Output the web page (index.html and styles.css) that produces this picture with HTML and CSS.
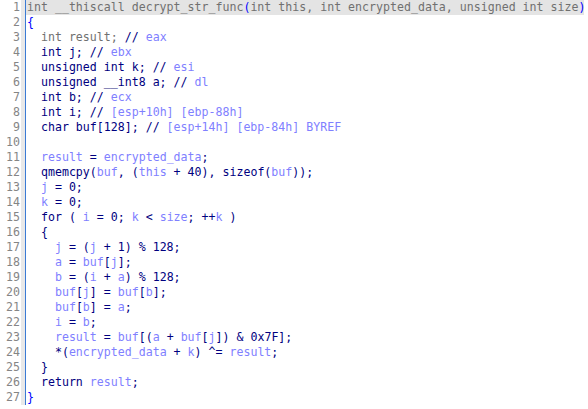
FILE: index.html
```html
<!DOCTYPE html>
<html>
<head>
<meta charset="utf-8">
<link rel="stylesheet" href="styles.css">
</head>
<body>
<div class="view">
<div class="gutter"><div>1</div><div>2</div><div>3</div><div>4</div><div>5</div><div>6</div><div>7</div><div>8</div><div>9</div><div>10</div><div>11</div><div>12</div><div>13</div><div>14</div><div>15</div><div>16</div><div>17</div><div>18</div><div>19</div><div>20</div><div>21</div><div>22</div><div>23</div><div>24</div><div>25</div><div>26</div><div>27</div></div>
<div class="code">
<div class="line cur"><span class="g">int __thiscall decrypt_str_func</span><span class="b">(</span><span class="g">int this, int encrypted_data, unsigned int size</span><span class="b">)</span></div>
<div class="line"><span class="b">{</span></div>
<div class="line">  <span class="g">int result;</span> // <span class="v">eax</span></div>
<div class="line">  int j; // <span class="v">ebx</span></div>
<div class="line">  unsigned int k; // <span class="v">esi</span></div>
<div class="line">  unsigned __int8 a; // <span class="v">dl</span></div>
<div class="line">  int b; // <span class="v">ecx</span></div>
<div class="line">  int i; // <span class="v">[esp+10h] [ebp-88h]</span></div>
<div class="line">  char buf[128]; // <span class="v">[esp+14h] [ebp-84h] BYREF</span></div>
<div class="line"> </div>
<div class="line">  <span class="v">result</span> = <span class="v">encrypted_data</span>;</div>
<div class="line">  qmemcpy(<span class="v">buf</span>, (<span class="v">this</span> + 40), sizeof(<span class="v">buf</span>));</div>
<div class="line">  <span class="v">j</span> = 0;</div>
<div class="line">  <span class="v">k</span> = 0;</div>
<div class="line">  for ( <span class="v">i</span> = 0; <span class="v">k</span> &lt; <span class="v">size</span>; ++<span class="v">k</span> )</div>
<div class="line">  {</div>
<div class="line">    <span class="v">j</span> = (<span class="v">j</span> + 1) % 128;</div>
<div class="line">    <span class="v">a</span> = <span class="v">buf</span>[<span class="v">j</span>];</div>
<div class="line">    <span class="v">b</span> = (<span class="v">i</span> + <span class="v">a</span>) % 128;</div>
<div class="line">    <span class="v">buf</span>[<span class="v">j</span>] = <span class="v">buf</span>[<span class="v">b</span>];</div>
<div class="line">    <span class="v">buf</span>[<span class="v">b</span>] = <span class="v">a</span>;</div>
<div class="line">    <span class="v">i</span> = <span class="v">b</span>;</div>
<div class="line">    <span class="v">result</span> = <span class="v">buf</span>[(<span class="v">a</span> + <span class="v">buf</span>[<span class="v">j</span>]) &amp; 0x7F];</div>
<div class="line">    *(<span class="v">encrypted_data</span> + <span class="v">k</span>) ^= <span class="v">result</span>;</div>
<div class="line">  }</div>
<div class="line">  return <span class="v">result</span>;</div>
<div class="line"><span class="b">}</span></div>
</div>
</div>
</body>
</html>
```
FILE: styles.css
```css
html, body {
  margin: 0;
  padding: 0;
  background: #ffffff;
}
.view {
  display: flex;
  font-family: "DejaVu Sans Mono", monospace;
  font-size: 11.6px;
  line-height: 15px;
}
.gutter {
  width: 20px;
  padding-right: 1px;
  text-align: right;
  color: #858585;
  border-right: 4px solid #e9e9e9;
}
.code {
  width: 558px;
  border-left: 1px solid #3b7bd4;
  color: #000080;
}
.line {
  white-space: pre;
  padding-left: 1px;
  height: 15px;
}
.cur {
  background: #e4e4e4;
}
.g { color: #707070; }
.v { color: #8080ff; }
.b { color: #0000ff; }
```
